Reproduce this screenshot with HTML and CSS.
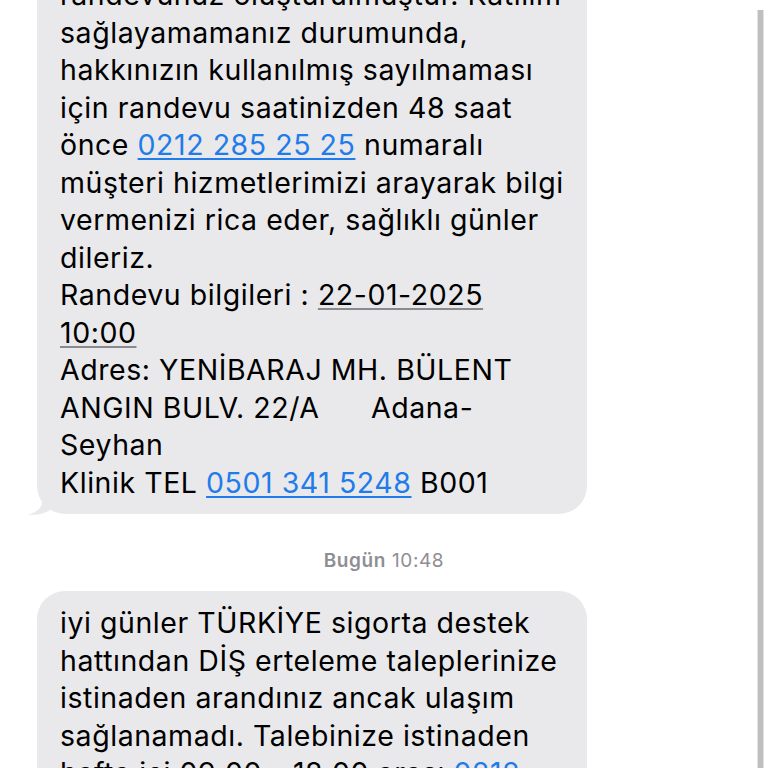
FILE: index.html
```html
<!DOCTYPE html>
<html lang="tr">
<head>
<meta charset="utf-8">
<title>Mesajlar</title>
<link rel="stylesheet" href="styles.css">
</head>
<body>
<div class="screen">
  <div class="thread">
    <div class="bubble first">
      <p class="msg">randevunuz oluşturulmuştur. Katılım<br>sağlayamamanız durumunda,<br>hakkınızın kullanılmış sayılmaması<br>için randevu saatinizden 48 saat<br>önce <span class="link">0212 285 25 25</span> numaralı<br>müşteri hizmetlerimizi arayarak bilgi<br>vermenizi rica eder, sağlıklı günler<br>dileriz.<br>Randevu bilgileri : <span class="date">22-01-2025</span><br><span class="date">10:00</span><br>Adres: YENİBARAJ MH. BÜLENT<br>ANGIN BULV. 22/A      Adana-<br>Seyhan<br>Klinik TEL <span class="link">0501 341 5248</span> B001</p>
      <svg class="tail" width="28" height="22" viewBox="0 0 28 22"><path d="M14 0 L14 8 C14 14 8 19 0 20.5 C8 21.5 17 20 24 15 L28 0 Z" fill="#e9e9eb"/></svg>
    </div>
    <div class="stamp"><b>Bugün</b> 10:48</div>
    <div class="bubble">
      <p class="msg">iyi günler TÜRKİYE sigorta destek<br>hattından DİŞ erteleme taleplerinize<br>istinaden arandınız ancak ulaşım<br>sağlanamadı. Talebinize istinaden<br>hafta içi 09:00 - 18:00 arası <span class="link">0212</span></p>
    </div>
  </div>
  <div class="scrollbar"></div>
</div>
</body>
</html>
```
FILE: styles.css
```css
html, body {
  margin: 0;
  padding: 0;
  background: #ffffff;
}
body {
  width: 768px;
  height: 768px;
  overflow: hidden;
  font-family: Inter, "Noto Sans", sans-serif;
  color: #000000;
}
.screen {
  position: relative;
  width: 768px;
  height: 768px;
  overflow: hidden;
}
.thread {
  display: flex;
  flex-direction: column;
  align-items: flex-start;
  padding-left: 37px;
  margin-top: -37px;
}
.bubble {
  position: relative;
  width: 550px;
  box-sizing: border-box;
  background: #e9e9eb;
  border-radius: 28px;
  padding: 13px 20px 13px 23px;
}
.msg {
  margin: 0;
  font-size: 28.5px;
  line-height: 37.5px;
  letter-spacing: 0.55px;
  white-space: pre;
}
.link {
  color: #1f7cea;
  text-decoration: underline;
  text-decoration-thickness: 1.5px;
  text-underline-offset: 3px;
}
.date {
  text-decoration: underline;
  text-decoration-color: #8a8a8e;
  text-decoration-thickness: 1.5px;
  text-underline-offset: 3px;
}
.tail {
  position: absolute;
  left: -9px;
  bottom: -2px;
}
.stamp {
  align-self: stretch;
  width: 694px;
  text-align: center;
  font-size: 19px;
  letter-spacing: 0.6px;
  color: #8e8e93;
  margin: 35px 0 19px;
}
.stamp b {
  font-weight: 600;
}
.scrollbar {
  position: absolute;
  left: 757px;
  top: 10px;
  width: 5px;
  height: 760px;
  background: #bfbfbf;
  border-left: 1px solid #e2e2e2;
  border-right: 1px solid #e2e2e2;
}
```
